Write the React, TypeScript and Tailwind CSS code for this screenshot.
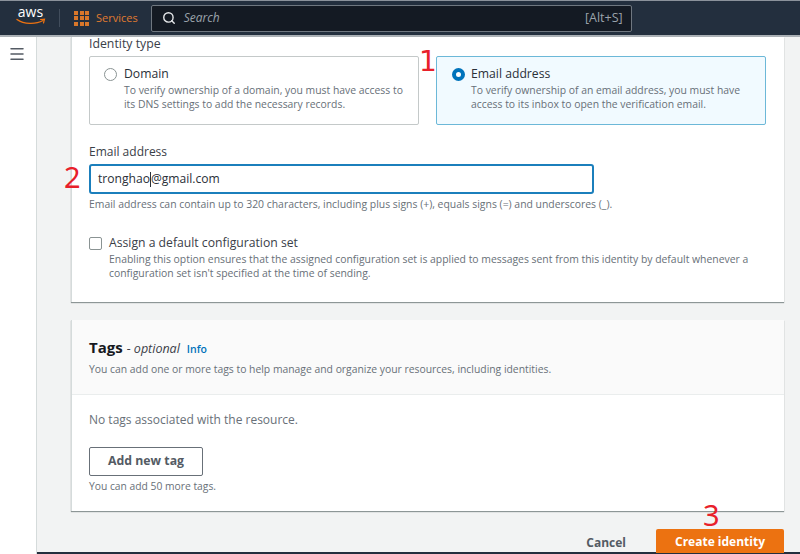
import React from 'react';
import { Search, Menu } from 'lucide-react';

const RadioCard = ({ title, desc, selected }: { title: string; desc: string[]; selected?: boolean }) => (
  <div
    className={`flex h-[69px] w-[330px] gap-[7px] rounded-[2px] border pt-[9px] pl-[14px] ${
      selected ? 'border-[#6cb8d8] bg-[#f1faff]' : 'border-[#c4c9c9] bg-white'
    }`}
  >
    {selected ? (
      <div className="mt-[2px] ml-[1px] mr-[-1px] h-[13px] w-[13px] rounded-full border-[4px] border-[#0073bb] bg-white" />
    ) : (
      <div className="mt-[2px] h-[13px] w-[13px] rounded-full border border-[#8a9393] bg-white" />
    )}
    <div>
      <div className="text-[12.2px] leading-[16px] text-[#2a3038]">{title}</div>
      <div className="mt-[1px] text-[10.4px] leading-[14px] text-[#687078]">
        {desc.map((line) => (
          <div key={line} className="whitespace-nowrap">{line}</div>
        ))}
      </div>
    </div>
  </div>
);

const AwsLogo = () => (
  <div className="relative h-[26px] w-[29px]">
    <div className="text-center text-[14px] leading-[14px] font-medium text-white">aws</div>
    <svg viewBox="0 0 30 8" className="absolute top-[13px] left-0 h-[8px] w-[30px]">
      <path d="M1 1.5C8 6.5 20 6.5 27 2.5" fill="none" stroke="#ec7211" strokeWidth="1.4" strokeLinecap="round" />
      <path d="M24.5 1.5L28.5 1.2L27.5 5" fill="none" stroke="#ec7211" strokeWidth="1.2" strokeLinecap="round" />
    </svg>
  </div>
);

const Header = () => (
  <header className="flex h-[37px] shrink-0 items-center border-t border-b-2 border-t-[#8b929b] border-b-[#aab0b5] bg-[#232f3e] pl-[16px]">
    <AwsLogo />
    <div className="ml-[14px] h-[18px] w-px bg-[#414d5c]" />
    <div className="ml-[14px] grid grid-cols-3 gap-[1.5px]">
      {Array.from({ length: 9 }).map((_, i) => (
        <div key={i} className="h-[4px] w-[4px] bg-[#d9772a]" />
      ))}
    </div>
    <span className="ml-[7px] text-[11px] text-[#e07b30]">Services</span>
    <div className="ml-[13px] flex h-[27px] w-[481px] items-center rounded-[2px] border border-[#6f7780] bg-[#141a23] pr-[8px] pl-[10px]">
      <Search size={14} strokeWidth={2.4} className="text-[#e6e8ea]" />
      <span className="ml-[8px] text-[12px] text-[#9ba3ab] italic">Search</span>
      <span className="ml-auto text-[12.5px] text-[#9ba3ab]">[Alt+S]</span>
    </div>
  </header>
);

const App = () => {
  return (
    <div className="relative flex h-[554px] w-[800px] flex-col overflow-hidden bg-white">
      <div className="flex h-full flex-col font-['Open_Sans','Noto_Sans',sans-serif]">
        <Header />
        <div className="flex min-h-0 flex-1">
          <nav className="w-[37px] shrink-0 border-r border-[#d5dbdb] bg-white pt-[8px] pl-[8px]">
            <Menu size={18} strokeWidth={2} className="text-[#545b64]" />
          </nav>
          <main className="flex min-w-0 flex-1 flex-col border-b-2 border-[#232f3e] bg-[#f2f3f3] pr-[16px] pl-[34px]">
            <section className="h-[265px] shrink-0 border-l border-[#d5dbdb] bg-white px-[17px] shadow-[0_1px_1px_#8d9696]">
              <div className="text-[12.3px] leading-[14px] text-[#3a4048]">Identity type</div>
              <div className="mt-[5px] flex gap-[17px]">
                <RadioCard
                  title="Domain"
                  desc={['To verify ownership of a domain, you must have access to', 'its DNS settings to add the necessary records.']}
                />
                <RadioCard
                  selected
                  title="Email address"
                  desc={['To verify ownership of an email address, you must have', 'access to its inbox to open the verification email.']}
                />
              </div>
              <div className="mt-[19px] text-[12px] leading-[16px] text-[#3a4048]">Email address</div>
              <div className="mt-[4px] flex h-[30px] w-[505px] items-center rounded-[3px] border-2 border-[#1b7fbc] pl-[7px] text-[12.1px] text-[#2a3038]">
                <span>tronghao</span>
                <span className="h-[15px] w-px bg-[#2a3038]" />
                <span>@gmail.com</span>
              </div>
              <div className="mt-[3px] text-[10.42px] leading-[14px] text-[#687078]">
                Email address can contain up to 320 characters, including plus signs (+), equals signs (=) and underscores (_).
              </div>
              <div className="mt-[24px] flex gap-[7px]">
                <div className="mt-[2px] h-[13px] w-[13px] shrink-0 rounded-[2px] border border-[#8a9393] bg-white" />
                <div>
                  <div className="text-[12.2px] leading-[16px] text-[#3a4048]">Assign a default configuration set</div>
                  <div className="mt-[1px] text-[10.4px] leading-[14px] text-[#687078]">
                    <div className="whitespace-nowrap">Enabling this option ensures that the assigned configuration set is applied to messages sent from this identity by default whenever a</div>
                    <div className="whitespace-nowrap">configuration set isn't specified at the time of sending.</div>
                  </div>
                </div>
              </div>
            </section>

            <section className="mt-[18px] h-[191px] shrink-0 border-l border-[#d5dbdb] bg-white shadow-[0_1px_1px_#8d9696]">
              <div className="h-[75px] border-b border-[#eaeded] bg-[#fafafa] px-[17px] pt-[17px]">
                <div className="flex items-baseline">
                  <span className="text-[15px] leading-[20px] font-bold text-[#16191f]">Tags</span>
                  <span className="ml-[4px] text-[12.5px] text-[#3a4048] italic">- optional</span>
                  <span className="ml-[7px] text-[10.5px] font-semibold text-[#0073bb]">Info</span>
                </div>
                <div className="mt-[3px] text-[10.37px] leading-[14px] text-[#687078]">
                  You can add one or more tags to help manage and organize your resources, including identities.
                </div>
              </div>
              <div className="px-[17px] pt-[17px]">
                <div className="text-[12px] leading-[16px] text-[#687078]">No tags associated with the resource.</div>
                <button className="mt-[19px] flex h-[29px] w-[114px] items-center justify-center rounded-[2px] border border-[#687078] bg-white text-[12.3px] font-bold text-[#545b64]">
                  Add new tag
                </button>
                <div className="mt-[3px] text-[10.3px] leading-[14px] text-[#687078]">You can add 50 more tags.</div>
              </div>
            </section>

            <div className="mt-[18px] flex flex-1 items-start justify-end">
              <span className="mt-[6px] mr-[30px] text-[12px] leading-[16px] font-bold text-[#545b64]">Cancel</span>
              <button className="h-[24px] w-[128px] rounded-t-[2px] bg-[#ec7211] pt-[1px] text-[12px] font-bold text-white">
                Create identity
              </button>
            </div>
          </main>
        </div>
      </div>

      <span className="absolute top-[45px] left-[419px] font-['DejaVu_Sans',sans-serif] text-[28px] leading-[34px] text-[#e8202a]">1</span>
      <span className="absolute top-[160px] left-[64px] font-['Noto_Sans',sans-serif] text-[29px] leading-[34px] text-[#e8202a]">2</span>
      <span className="absolute top-[498px] left-[703px] font-['Noto_Sans',sans-serif] text-[29px] leading-[34px] text-[#e8202a]">3</span>
    </div>
  );
};

export default App;
